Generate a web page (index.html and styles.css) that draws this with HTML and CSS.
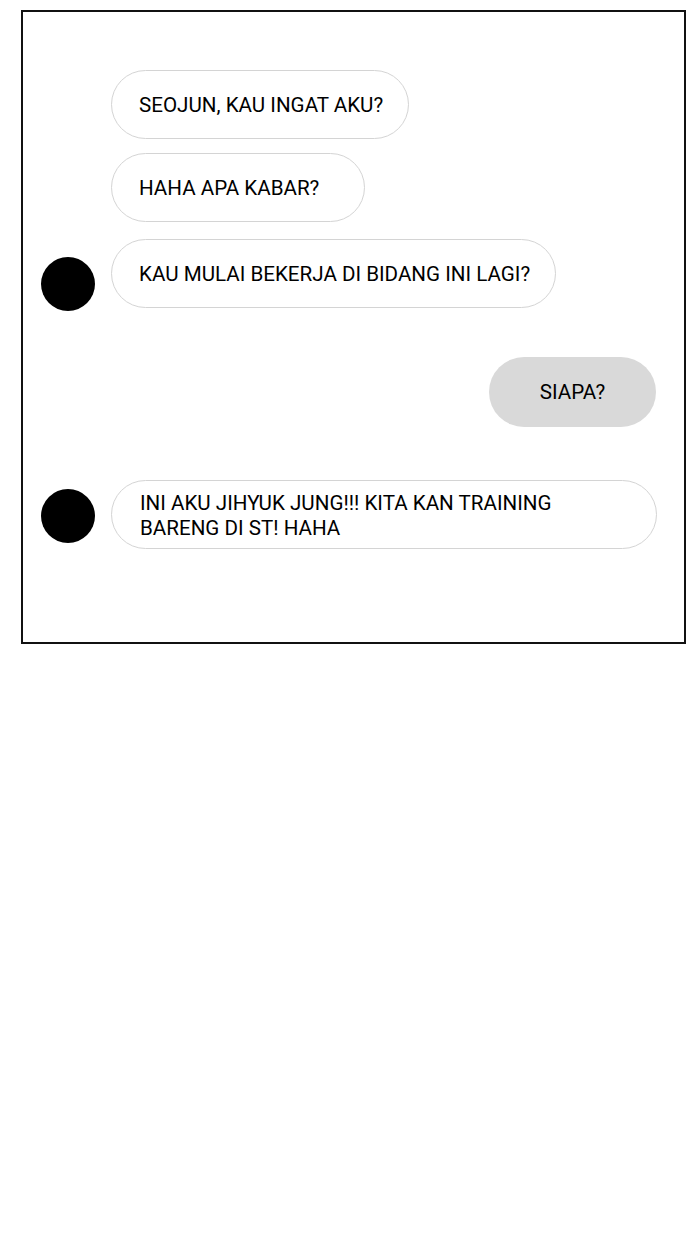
FILE: index.html
```html
<!DOCTYPE html>
<html lang="en">
  <head>
    <meta charset="UTF-8" />
    <meta name="viewport" content="width=device-width, initial-scale=1.0" />
    <title>Chat</title>
    <link rel="stylesheet" href="styles.css">
  </head>
  <body>
    <div class="panel">
      <div class="thread thread--first">
        <div class="avatar avatar--low"></div>
        <div class="thread__bubbles">
          <div class="bubble">SEOJUN, KAU INGAT AKU?</div>
          <div class="bubble bubble--wide">HAHA APA KABAR?</div>
          <div class="bubble bubble--last">KAU MULAI BEKERJA DI BIDANG INI LAGI?</div>
        </div>
      </div>

      <div class="reply">
        <div class="bubble bubble--me">SIAPA?</div>
      </div>

      <div class="thread thread--second">
        <div class="avatar"></div>
        <div class="thread__bubbles thread__bubbles--full">
          <div class="bubble bubble--long">INI AKU JIHYUK JUNG!!! KITA KAN TRAINING<br>BARENG DI ST! HAHA</div>
        </div>
      </div>
    </div>
  </body>
</html>
```

FILE: styles.css
```css
* {
  margin: 0;
  padding: 0;
  box-sizing: border-box;
}

body {
  background: #fff;
  font-family: Roboto, "Liberation Sans", sans-serif;
  color: #000;
}

.panel {
  margin: 10px 0 0 21px;
  width: 665px;
  height: 634px;
  border: 2px solid #111;
  padding: 58px 28px 0 18px;
}

.thread {
  display: flex;
  align-items: flex-end;
  gap: 16px;
}

.thread__bubbles {
  display: flex;
  flex-direction: column;
  align-items: flex-start;
}

.thread__bubbles--full {
  flex: 1;
  align-items: stretch;
  margin-right: -1px;
}

.avatar {
  width: 54px;
  height: 54px;
  border-radius: 50%;
  background: #000;
  flex-shrink: 0;
  align-self: center;
  margin-top: 3px;
}

.avatar--low {
  align-self: flex-end;
  margin-bottom: -3px;
}

.bubble {
  height: 69px;
  display: flex;
  align-items: center;
  padding: 1px 25px 0 27px;
  border: 1px solid #d4d4d4;
  border-radius: 35px;
  background: #fff;
  font-size: 20.6px;
  line-height: 25px;
  margin-bottom: 14px;
}

.bubble--wide {
  padding-right: 45px;
  margin-bottom: 17px;
}

.bubble--last {
  padding-right: 25px;
  margin-bottom: 0;
}

.bubble--long {
  padding-left: 28px;
  padding-top: 2px;
  margin-bottom: 0;
}

.reply {
  display: flex;
  justify-content: flex-end;
  margin: 49px 0 53px;
}

.bubble--me {
  width: 167px;
  height: 70px;
  justify-content: center;
  padding: 0;
  border: none;
  background: #d9d9d9;
  margin-bottom: 0;
}
```
